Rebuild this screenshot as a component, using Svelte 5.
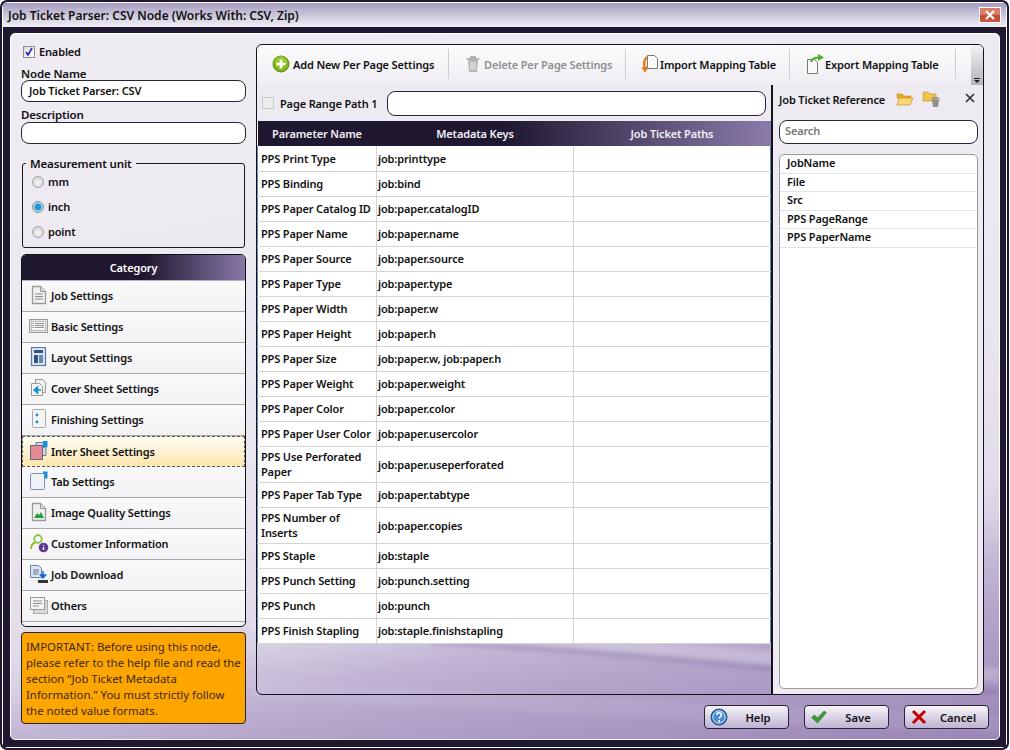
<script>
  const categories = [
    { label: 'Job Settings', icon: 'job' },
    { label: 'Basic Settings', icon: 'basic' },
    { label: 'Layout Settings', icon: 'layout' },
    { label: 'Cover Sheet Settings', icon: 'cover' },
    { label: 'Finishing Settings', icon: 'finishing' },
    { label: 'Inter Sheet Settings', icon: 'inter', active: true },
    { label: 'Tab Settings', icon: 'tab' },
    { label: 'Image Quality Settings', icon: 'image' },
    { label: 'Customer Information', icon: 'customer' },
    { label: 'Job Download', icon: 'download' },
    { label: 'Others', icon: 'others' }
  ];
  const rows = [
    ['PPS Print Type', 'job:printtype'],
    ['PPS Binding', 'job:bind'],
    ['PPS Paper Catalog ID', 'job:paper.catalogID'],
    ['PPS Paper Name', 'job:paper.name'],
    ['PPS Paper Source', 'job:paper.source'],
    ['PPS Paper Type', 'job:paper.type'],
    ['PPS Paper Width', 'job:paper.w'],
    ['PPS Paper Height', 'job:paper.h'],
    ['PPS Paper Size', 'job:paper.w, job:paper.h'],
    ['PPS Paper Weight', 'job:paper.weight'],
    ['PPS Paper Color', 'job:paper.color'],
    ['PPS Paper User Color', 'job:paper.usercolor'],
    ['PPS Use Perforated Paper', 'job:paper.useperforated', true],
    ['PPS Paper Tab Type', 'job:paper.tabtype'],
    ['PPS Number of Inserts', 'job:paper.copies', true],
    ['PPS Staple', 'job:staple'],
    ['PPS Punch Setting', 'job:punch.setting'],
    ['PPS Punch', 'job:punch'],
    ['PPS Finish Stapling', 'job:staple.finishstapling']
  ];
  const refs = ['JobName', 'File', 'Src', 'PPS PageRange', 'PPS PaperName'];
</script>

<div class="window">
  <header class="titlebar">
    <span class="title">Job Ticket Parser: CSV Node (Works With: CSV, Zip)</span>
    <span class="close">
      <svg viewBox="0 0 12 12" width="12" height="12"><path d="M2 2l8 8M10 2l-8 8" stroke="#fff" stroke-width="2.2" fill="none"/></svg>
    </span>
  </header>
  <div class="frame">
    <div class="client">
      <svg class="waves" viewBox="0 0 988 240" preserveAspectRatio="none" aria-hidden="true">
        <defs><filter id="soft" x="-5%" y="-50%" width="110%" height="200%"><feGaussianBlur stdDeviation="2.5"/></filter></defs>
        <path d="M240 125C420 130 620 150 988 176" stroke="#ffffff" stroke-width="14" fill="none" opacity=".22" filter="url(#soft)"/>
        <path d="M420 143C560 150 680 160 988 194" stroke="#7f6a9e" stroke-width="4" fill="none" opacity=".45" filter="url(#soft)"/>
        <path d="M240 190C440 200 700 215 988 225" stroke="#ffffff" stroke-width="18" fill="none" opacity=".07" filter="url(#soft)"/>
      </svg>

      <aside class="left">
        <label class="enabled">
          <span class="check on">
            <svg viewBox="0 0 10 10" width="10" height="10"><path d="M2 5l2 3 4-7" stroke="#2b2bb0" stroke-width="1.7" fill="none"/></svg>
          </span>
          Enabled
        </label>
        <div class="flabel first">Node Name</div>
        <div class="input">Job Ticket Parser: CSV</div>
        <div class="flabel second">Description</div>
        <div class="input"></div>

        <fieldset class="units">
          <legend>Measurement unit</legend>
          <div class="radio"><span class="dot"></span>mm</div>
          <div class="radio"><span class="dot on"></span>inch</div>
          <div class="radio"><span class="dot"></span>point</div>
        </fieldset>

        <section class="category">
          <div class="cat-head">Category</div>
          {#each categories as c}
            <div class="cat-item" class:active={c.active}>
              <span class="cat-icon">
                <svg viewBox="0 0 20 20" width="20" height="20">
                  {#if c.icon === 'job'}
                    <path d="M3.5 1.5h8l5 5v12h-13z" fill="#f1f0ee" stroke="#9a9a9a" stroke-width="1.3"/><path d="M11.5 1.5v5h5" fill="#ddd" stroke="#9a9a9a"/><path d="M6 9h8M6 11.5h8M6 14h8" stroke="#8b8b8b"/>
                  {:else if c.icon === 'basic'}
                    <rect x="0.5" y="3.5" width="18" height="13" fill="#e4e4e4" stroke="#9a9a9a"/><rect x="2.5" y="5.5" width="14" height="9" fill="#fafafa" stroke="#bbb"/><path d="M6 7.5h9M6 9.5h9M6 11.5h9M3.5 7.5h1.5M3.5 9.5h1.5M3.5 11.5h1.5" stroke="#8b8b8b"/>
                  {:else if c.icon === 'layout'}
                    <rect x="2.5" y="0.5" width="14" height="18" fill="#dfe6f2" stroke="#5c79a8" stroke-width="1.2"/><rect x="5" y="3" width="9" height="3" fill="#2f5487"/><rect x="5" y="8" width="4" height="8" fill="#2f5487"/><rect x="10" y="8" width="4" height="8" fill="#6a86b0"/>
                  {:else if c.icon === 'cover'}
                    <path d="M6.5 1.5h7l3 3v10h-10z" fill="#f0f0f0" stroke="#999"/><path d="M2.5 5.5h8l3 3v9h-11z" fill="#f7f7f7" stroke="#999"/><path d="M12 12H6M8.5 9 5 12l3.5 3z" stroke="#1a8fd6" fill="#1a8fd6" stroke-width="1.5"/>
                  {:else if c.icon === 'finishing'}
                    <rect x="3.5" y="0.5" width="13" height="18" rx="1" fill="#f3f3f3" stroke="#aaa"/><circle cx="8" cy="6" r="1.4" fill="#1a8fd6"/><circle cx="8" cy="13" r="1.4" fill="#1a8fd6"/>
                  {:else if c.icon === 'inter'}
                    <path d="M7 1.5h10v13H7z" fill="#cfd8e6" stroke="#6a7c99"/><path d="M14 0h4.500v6l-4.500 1z" fill="#1a8fd6"/><rect x="1.500" y="4.500" width="12" height="14" fill="#e58a94" stroke="#6a6a80"/>
                  {:else if c.icon === 'tab'}
                    <rect x="1.500" y="2.500" width="14" height="16" rx="1" fill="#eef2f9" stroke="#7a93bd"/><path d="M14 0.500h4.500v7H15.500V3L14 2.500z" fill="#1a8fd6"/>
                  {:else if c.icon === 'image'}
                    <path d="M3.500 1.500h8l5 5v12h-13z" fill="#f1f0ee" stroke="#9a9a9a" stroke-width="1.3"/><path d="M11.500 1.500v5h5" fill="#ddd" stroke="#9a9a9a"/><path d="M5 16l3-5 2 2 2-3 3 6z" fill="#22a03c"/>
                  {:else if c.icon === 'customer'}
                    <circle cx="9" cy="6" r="3.800" fill="none" stroke="#8cbf3a" stroke-width="1.800"/><path d="M2 16c0-4 2-6 4.500-6.500" fill="none" stroke="#8cbf3a" stroke-width="1.800"/><circle cx="14.500" cy="14.500" r="4.800" fill="#5b3a93"/><path d="M14.500 12v.8M14.500 14v3" stroke="#fff" stroke-width="1.400"/>
                  {:else if c.icon === 'download'}
                    <path d="M1.500 1.500h8l3 3v9h-11z" fill="#dfe6f2" stroke="#6a86b0"/><path d="M4 6h6M4 8h6M4 10h5" stroke="#5c79a8"/><path d="M14 7v6M11.500 11l2.500 3 2.500-3z" stroke="#1466d6" fill="#1466d6" stroke-width="1.400"/><rect x="9" y="16" width="10" height="3" fill="#333"/>
                  {:else}
                    <rect x="4.500" y="5.500" width="14" height="13" fill="#d8d8d8" stroke="#aaa"/><rect x="1.500" y="2.500" width="14" height="12" fill="#f6f6f6" stroke="#999"/><path d="M4 6h9M4 8.500h9M4 11h6" stroke="#8b8b8b"/>
                  {/if}
                </svg>
              </span>
              {c.label}
            </div>
          {/each}
        </section>

        <div class="notice">IMPORTANT: Before using this node, please refer to the help file and read the section “Job Ticket Metadata Information.” You must strictly follow the noted value formats.</div>
      </aside>

      <section class="main">
        <div class="toolbar">
          <div class="tools">
            <button class="tool add">
              <svg viewBox="0 0 18 18" width="18" height="18"><circle cx="9" cy="9" r="8" fill="#7cb518" stroke="#5d8f10"/><circle cx="9" cy="7" r="6" fill="#a7d64a" opacity=".6"/><path d="M9 4.500v9M4.500 9h9" stroke="#fff" stroke-width="2.600"/></svg>
              Add New Per Page Settings
            </button>
            <i class="sep"></i>
            <button class="tool del">
              <svg viewBox="0 0 18 18" width="18" height="18"><path d="M2.500 4h13M7 4V2h4v2" stroke="#a0a0a0" stroke-width="1.500" fill="none"/><path d="M4 5h10l-1 12H5z" fill="#b5b5b5"/><path d="M7 7v8M9 7v8M11 7v8" stroke="#eee"/></svg>
              Delete Per Page Settings
            </button>
            <i class="sep"></i>
            <button class="tool imp">
              <svg viewBox="0 0 18 20" width="18" height="20"><path d="M6.500 1.500h7l3 3v10h-10z" fill="#fafafa" stroke="#777"/><path d="M6 3C3 6 2.500 10 4 14" stroke="#e87a1c" stroke-width="2.400" fill="none"/><path d="M.5 13h7L4 19z" fill="#e87a1c"/></svg>
              Import Mapping Table
            </button>
            <i class="sep"></i>
            <button class="tool exp">
              <svg viewBox="0 0 20 20" width="20" height="20"><path d="M2.500 5.500h7l3 3v11h-10z" fill="#fafafa" stroke="#777"/><path d="M6 8c1-3 4-4.500 8-4.500" stroke="#4caf2a" stroke-width="2.200" fill="none"/><path d="M13 0l6 3.500L13 7z" fill="#4caf2a"/></svg>
              Export Mapping Table
            </button>
            <i class="sep"></i>
          </div>
          <div class="grip"><span></span></div>
        </div>

        <div class="body">
          <div class="mapping">
            <div class="range">
              <span class="check off"></span>
              <span class="range-label">Page Range Path 1</span>
              <div class="input range-input"></div>
            </div>
            <table>
              <colgroup><col class="c1" /><col class="c2" /><col class="c3" /></colgroup>
              <thead>
                <tr><th>Parameter Name</th><th>Metadata Keys</th><th>Job Ticket Paths</th></tr>
              </thead>
              <tbody>
                {#each rows as r}
                  <tr class:tall={r[2]}><td>{r[0]}</td><td>{r[1]}</td><td></td></tr>
                {/each}
              </tbody>
            </table>
          </div>

          <aside class="reference">
            <div class="ref-head">
              <span class="ref-title">Job Ticket Reference</span>
              <svg class="f1" viewBox="0 0 18 16" width="18" height="16"><path d="M1 3h5l2 2h7v2H1z" fill="#e8a92e" stroke="#c98a1a" stroke-width=".6"/><path d="M1 14l2-7h14l-3 7z" fill="#fbd77a" stroke="#d19a2a" stroke-width=".8"/></svg>
              <svg class="f2" viewBox="0 0 20 18" width="20" height="18"><path d="M1 2h5l2 2h6v7H1z" fill="#f2c14e" stroke="#c98a1a" stroke-width=".6"/><path d="M9 9h9M11 9V7.500h5V9" stroke="#8a8a8a" fill="none"/><path d="M10 10h7l-1 7h-5z" fill="#8f8f8f"/></svg>
              <svg class="x" viewBox="0 0 10 10" width="10" height="10"><path d="M1 1l8 8M9 1l-8 8" stroke="#333" stroke-width="1.700"/></svg>
            </div>
            <div class="input search">Search</div>
            <ul class="ref-list">
              {#each refs as r}<li>{r}</li>{/each}
            </ul>
          </aside>
        </div>
      </section>

      <footer class="actions">
        <button class="btn">
          <svg viewBox="0 0 18 18" width="18" height="18"><circle cx="9" cy="9" r="8" fill="#2e6fb5" stroke="#1c4f8c"/><circle cx="9" cy="9" r="6.200" fill="#4a8bd0" stroke="#e6f0fa"/><path d="M6.800 7c0-3 4.600-3 4.600 0 0 1.800-2.300 1.800-2.300 3.600" stroke="#fff" stroke-width="1.700" fill="none"/><circle cx="9.100" cy="13" r="1.100" fill="#fff"/></svg>
          <span>Help</span>
        </button>
        <button class="btn">
          <svg viewBox="0 0 18 18" width="18" height="18"><path d="M1.500 9.500l3-2.500 3 3L14 3l2.500 1.500L7.500 15z" fill="#3a9a3a" stroke="#2a7a2a" stroke-width=".6"/></svg>
          <span>Save</span>
        </button>
        <button class="btn">
          <svg viewBox="0 0 18 18" width="18" height="18"><path d="M3 3l12 12M15 3L3 15" stroke="#c40000" stroke-width="3" fill="none"/></svg>
          <span>Cancel</span>
        </button>
      </footer>
    </div>
  </div>
</div>

<style>
  :global(body) { margin: 0; background: #fff; }
  :global(*) { box-sizing: border-box; }

  .window {
    width: 1009px;
    height: 750px;
    border: 2px solid #1f1830;
    border-radius: 7px;
    box-shadow: inset 0 0 0 1px #fff;
    padding: 1px;
    display: flex;
    flex-direction: column;
    background: #1f1830;
    font: 600 11px "Noto Sans", sans-serif;
    letter-spacing: -0.15px;
    color: #111;
    overflow: hidden;
  }
  .titlebar {
    height: 24px;
    flex: none;
    display: flex;
    align-items: center;
    justify-content: space-between;
    padding: 0 5px 0 5px;
    background: linear-gradient(#a69cc0, #f1eff5);
    border-radius: 4px 4px 0 0;
  }
  .title { font-size: 12px; letter-spacing: 0; color: #111; }
  .close {
    width: 22px;
    height: 16px;
    display: flex;
    align-items: center;
    justify-content: center;
    border: 1px solid #fff;
    background: linear-gradient(#dd7d69 0 45%, #c14a33 55%, #c9573f);
  }
  .frame {
    flex: 1;
    min-height: 0;
    padding: 6px 6px 7px 7px;
    background: #1f1830;
  }
  .client {
    position: relative;
    height: 100%;
    border: 1px solid #fff;
    border-radius: 5px;
    padding: 10px;
    background: linear-gradient(170deg, #efecf3 0, #ebe7f0 50%, #e2dcea 70%, #d8d0e4 74.5%, #c2b5d4 80%, #b5a5ca 85%, #9a85b6 100%);
    display: grid;
    grid-template-columns: 225px 1fr;
    grid-template-rows: 651px 24px;
    column-gap: 10px;
    row-gap: 10px;
    overflow: hidden;
  }
  .waves {
    position: absolute;
    left: 0; bottom: 0;
    width: 100%;
    height: 240px;
    pointer-events: none;
  }

  /* left column */
  .left {
    position: relative;
    grid-row: 1 / 3;
    display: flex;
    flex-direction: column;
  }
  .enabled {
    display: flex;
    align-items: center;
    gap: 4px;
    height: 15px;
    margin: 0 0 0 2px;
  }
  .check {
    width: 12px;
    height: 12px;
    display: inline-flex;
    align-items: center;
    justify-content: center;
    border: 1px solid #8e8f8f;
    background: linear-gradient(135deg, #dcdcdc, #fff);
    flex: none;
  }
  .check.off { border-color: #c8c8c8; background: #ececec; }
  .flabel { height: 14px; line-height: 14px; font-size: 11.5px; }
  .flabel.first { margin-top: 8px; height: 13px; }
  .flabel.second { margin-top: 6px; }
  .input {
    height: 22px;
    line-height: 20px;
    border: 1px solid #2a2438;
    border-radius: 8px;
    background: #fff;
    padding: 0 7px;
    flex: none;
  }
  .units {
    margin: 13px 1px 0 1px;
    height: 91px;
    padding: 0;
    border: 1px solid #1a1a1a;
    border-radius: 3px;
    display: flex;
    flex-direction: column;
    flex: none;
  }
  .units legend { padding: 0 4px; margin-left: 3px; font-size: 11.5px; line-height: 13px; }
  .radio {
    height: 25px;
    display: flex;
    align-items: center;
    gap: 4px;
    padding-left: 9px;
  }
  .units .radio:first-of-type { margin-top: -1px; }
  .dot {
    width: 12px;
    height: 12px;
    border-radius: 50%;
    border: 1px solid #a2a2a2;
    background: radial-gradient(circle at 50% 60%, #f4f4f4, #cfcfcf);
  }
  .dot.on {
    border-color: #7d8a94;
    background: radial-gradient(circle, #1a9ad6 0 3px, #bcd4e2 4px, #e8e8e8 100%);
  }

  .category {
    margin-top: 6px;
    height: 373px;
    flex: none;
    border: 1px solid #111;
    border-radius: 5px;
    background: #f4f3f6;
    overflow: hidden;
  }
  .cat-head {
    height: 26px;
    line-height: 26px;
    text-align: center;
    color: #fff;
    background: linear-gradient(90deg, #1f1830 0, #1f1830 55%, #8878a8 100%);
    border-bottom: 1px solid #b8aec8;
  }
  .cat-item {
    height: 31px;
    display: flex;
    align-items: center;
    gap: 2px;
    padding: 0 0 2px 7px;
    border-bottom: 1px solid #a8a8a8;
    background: linear-gradient(#fafafa, #f2f1f4);
  }
  .cat-icon { width: 20px; height: 20px; display: block; flex: none; }
  .cat-icon svg { display: block; }
  .cat-item.active {
    background: linear-gradient(#fffdf5, #fde6ad);
    border: 1px dashed #555;
    padding: 0 0 1px 6px;
  }
  .notice {
    margin-top: 5px;
    height: 92px;
    flex: none;
    background: #ffa500;
    border: 1px solid #222;
    border-radius: 4px;
    padding: 6px 4px;
    font-weight: 400;
    font-size: 11.4px;
    letter-spacing: 0;
    line-height: 16px;
    color: #3a2a10;
  }

  /* main */
  .main {
    position: relative;
    margin-right: 5px;
    border: 1px solid #15101f;
    border-radius: 6px;
    display: flex;
    flex-direction: column;
    min-width: 0;
  }
  .toolbar {
    height: 40px;
    flex: none;
    display: flex;
    background: linear-gradient(#fbfbfc, #efedf3);
    border-radius: 6px 6px 0 0;
  }
  .tools { flex: 1; display: flex; align-items: center; padding: 0 0 2px 15px; }
  .tool {
    all: unset;
    display: flex;
    align-items: center;
    gap: 1px;
    font: 600 11px "Noto Sans", sans-serif;
    letter-spacing: -0.15px;
    color: #111;
    height: 30px;
  }
  .tool.del { color: #8f8f8f; gap: 2px; }
  .sep { width: 1px; height: 30px; background: #cfccd6; }
  .add { width: 176px; gap: 3px; }
  .del { width: 161px; margin-left: 15px; }
  .imp { width: 148px; margin-left: 15px; }
  .exp { width: 150px; margin-left: 15px; gap: 0; }
  .grip {
    width: 12px;
    background: linear-gradient(#f3f2f5, #b5b3bb);
    position: relative;
    border-radius: 0 5px 0 0;
  }
  .grip span {
    position: absolute;
    left: 3px; bottom: 3px;
    width: 6px; height: 4px;
    border-top: 1px solid #222;
  }
  .grip span::after {
    content: '';
    position: absolute;
    left: 0; top: 1px;
    border: 3px solid transparent;
    border-top-color: #222;
    border-bottom: 0;
  }
  .body { flex: 1; min-height: 0; display: flex; }
  .mapping {
    width: 514px;
    flex: none;
    display: flex;
    flex-direction: column;
  }
  .range {
    height: 36px;
    flex: none;
    display: flex;
    align-items: center;
    background: #edebf1;
    padding-left: 5px;
    gap: 6px;
  }
  .range-label { width: 101px; }
  .range-input { width: 379px; height: 25px; flex: none; }
  table {
    width: 513px;
    border-collapse: collapse;
    table-layout: fixed;
    background: #fff;
  }
  .c1 { width: 119px; }
  .c2 { width: 197px; }
  .c3 { width: 197px; }
  th {
    height: 25px;
    padding: 0;
    color: #f2f0f6;
    font-weight: 600;
    background: none;
    text-align: center;
  }
  thead tr { background: linear-gradient(90deg, #1f1830 0, #1f1830 48%, #8b7bab 100%); }
  td {
    height: 25px;
    padding: 0 0 0 3px;
    border: 1px solid #d4d4d4;
    border-top: 0;
    line-height: 15px;
  }
  td:nth-child(2) { padding-left: 1px; }
  tr.tall td { height: 36px; }
  td:first-child { border-left: 1px solid #5c88a8; }
  td:last-child { border-right: 1px solid #5c88a8; }
  .reference {
    flex: 1;
    border-left: 2px solid #15101f;
    background: #edebf1;
    padding: 0 5px 5px 6px;
    display: flex;
    flex-direction: column;
    min-width: 0;
    border-radius: 0 0 5px 0;
  }
  .ref-head {
    position: relative;
    height: 35px;
    padding-bottom: 7px;
    flex: none;
    display: flex;
    align-items: center;
  }
  .ref-title { width: 117px; }
  .f1 { margin-right: 8px; }
  .x { position: absolute; right: 3px; top: 8px; }
  .search {
    height: 24px;
    color: #777;
    width: 199px;
    padding: 0 5px;
  }
  .ref-list {
    list-style: none;
    margin: 10px 0 0 0;
    padding: 0;
    flex: 1;
    width: 199px;
    background: #fff;
    border: 1px solid #9b9b9b;
    border-radius: 5px;
  }
  .ref-list li {
    height: 18.5px;
    line-height: 15.5px;
    padding-left: 7px;
    border-bottom: 1px solid #e4e4e4;
  }

  /* footer */
  .actions {
    position: relative;
    grid-column: 2;
    display: flex;
    justify-content: flex-end;
    gap: 15px;
  }
  .btn {
    width: 85px;
    height: 24px;
    display: flex;
    align-items: center;
    padding: 0 0 0 5px;
    border: 1px solid #2a2438;
    border-radius: 4px;
    background: linear-gradient(#f7f5fa, #bfb3d3);
    font: 600 11.2px "Noto Sans", sans-serif;
    color: #111;
  }
  .btn span { flex: 1; text-align: center; }
</style>
